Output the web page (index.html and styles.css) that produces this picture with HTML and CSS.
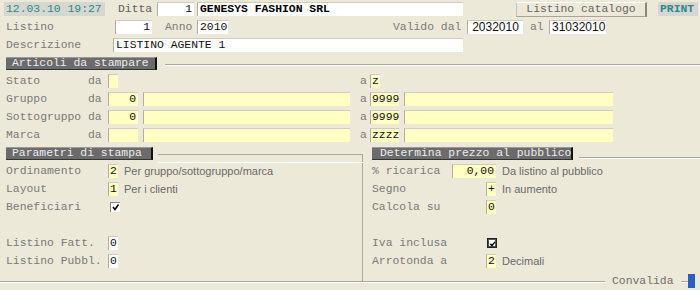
FILE: index.html
```html
<!DOCTYPE html>
<html lang="it">
<head>
    <meta charset="UTF-8">
    <title>Listino catalogo</title>
    <link rel="stylesheet" href="styles.css">
</head>
<body>
    <div class="row row-top">
        <span class="clock">12.03.10 19:27</span>
        <span class="lbl lbl-ditta">Ditta</span>
        <span class="fld white num w-code">1</span>
        <span class="fld white strong w-name">GENESYS FASHION SRL</span>
        <span class="btn">Listino catalogo</span>
        <span class="print">PRINT</span>
    </div>
    <div class="row row-pad">
        <span class="lbl w-listino">Listino</span>
        <span class="fld white num w-code">1</span>
        <span class="lbl lbl-anno">Anno</span>
        <span class="fld white w-anno">2010</span>
        <span class="lbl lbl-valido">Valido dal</span>
        <span class="fld white date w-date">2032010</span>
        <span class="lbl lbl-al">al</span>
        <span class="fld white date w-date2">31032010</span>
    </div>
    <div class="row row-pad">
        <span class="lbl w-descr">Descrizione</span>
        <span class="fld white w-descr-fld">LISTINO AGENTE 1</span>
    </div>

    <!-- articoli da stampare -->
    <div class="sec-row">
        <span class="sec w-sec1">Articoli da stampare</span>
        <span class="sec-line"></span>
    </div>
    <div class="range">
        <span class="lbl">Stato</span><span class="lbl">da</span>
        <span class="from"><span class="fld yellow w-tiny"></span></span>
        <span class="lbl">a</span>
        <span class="to"><span class="fld yellow w-tiny">z</span></span>

        <span class="lbl">Gruppo</span><span class="lbl">da</span>
        <span class="from"><span class="fld yellow num w-cod">0</span><span class="fld yellow w-desc1"></span></span>
        <span class="lbl">a</span>
        <span class="to"><span class="fld yellow w-cod2">9999</span><span class="fld yellow w-desc2"></span></span>

        <span class="lbl">Sottogruppo</span><span class="lbl">da</span>
        <span class="from"><span class="fld yellow num w-cod">0</span><span class="fld yellow w-desc1"></span></span>
        <span class="lbl">a</span>
        <span class="to"><span class="fld yellow w-cod2">9999</span><span class="fld yellow w-desc2"></span></span>

        <span class="lbl">Marca</span><span class="lbl">da</span>
        <span class="from"><span class="fld yellow w-cod"></span><span class="fld yellow w-desc1"></span></span>
        <span class="lbl">a</span>
        <span class="to"><span class="fld yellow w-cod2">zzzz</span><span class="fld yellow w-desc2"></span></span>
    </div>

    <!-- parametri / prezzo -->
    <div class="params">
        <div class="col-left">
            <div class="sec-row sec-row-left">
                <span class="sec w-sec2">Parametri di stampa</span>
                <span class="sec-line sec-corner"></span>
            </div>
            <div class="col-body">
                <div class="prow">
                    <span class="lbl w-plbl">Ordinamento</span>
                    <span class="fld yellow w-tiny">2</span>
                    <span class="note">Per gruppo/sottogruppo/marca</span>
                </div>
                <div class="prow">
                    <span class="lbl w-plbl">Layout</span>
                    <span class="fld yellow w-tiny">1</span>
                    <span class="note">Per i clienti</span>
                </div>
                <div class="prow">
                    <span class="lbl w-plbl">Beneficiari</span>
                    <span class="chk">
                        <svg width="9" height="9" viewBox="0 0 9 9"><polyline points="2,4 4,6.5 7.5,1.5" fill="none" stroke="#000" stroke-width="1.6"/></svg>
                    </span>
                </div>
                <div class="prow"></div>
                <div class="prow">
                    <span class="lbl w-plbl">Listino Fatt.</span>
                    <span class="fld white w-tiny">0</span>
                </div>
                <div class="prow">
                    <span class="lbl w-plbl">Listino Pubbl.</span>
                    <span class="fld white w-tiny">0</span>
                </div>
            </div>
        </div>
        <div class="col-right">
            <div class="sec-row">
                <span class="sec w-sec3">Determina prezzo al pubblico</span>
                <span class="sec-line sec-line-low"></span>
            </div>
            <div class="prow">
                <span class="lbl w-rlbl">% ricarica</span>
                <span class="slot"><span class="fld yellow num w-perc">0,00</span></span>
                <span class="note">Da listino al pubblico</span>
            </div>
            <div class="prow">
                <span class="lbl w-rlbl">Segno</span>
                <span class="slot"><span class="fld yellow w-tiny">+</span></span>
                <span class="note">In aumento</span>
            </div>
            <div class="prow">
                <span class="lbl w-rlbl">Calcola su</span>
                <span class="slot"><span class="fld yellow w-tiny">0</span></span>
            </div>
            <div class="prow"></div>
            <div class="prow">
                <span class="lbl w-rlbl">Iva inclusa</span>
                <span class="slot">
                    <span class="chk chk-dark">
                        <svg width="8" height="8" viewBox="0 0 8 8"><polyline points="1.5,3.8 3.4,5.8 6.8,1.6" fill="none" stroke="#000" stroke-width="1.6"/></svg>
                    </span>
                </span>
            </div>
            <div class="prow">
                <span class="lbl w-rlbl">Arrotonda a</span>
                <span class="slot"><span class="fld yellow w-tiny">2</span></span>
                <span class="note">Decimali</span>
            </div>
        </div>
    </div>

    <div class="footer">
        <span class="foot-line"></span>
        <span class="lbl foot-text">Convalida</span>
        <span class="foot-line foot-short"></span>
        <span class="mark"></span>
    </div>
</body>
</html>
```

FILE: styles.css
```css
* {
    box-sizing: border-box;
}
body {
    margin: 0;
    width: 700px;
    height: 290px;
    overflow: hidden;
    background-color: #ece9d8;
    font-family: 'Liberation Mono', 'Courier New', monospace;
    font-size: 11.4px;
    color: #7a7a7a;
}
.row {
    display: flex;
    align-items: center;
    height: 18px;
}
.row-top {
    padding-left: 4px;
}
.row-pad {
    padding-left: 6px;
}
.lbl {
    display: inline-block;
    white-space: pre;
    line-height: 14px;
}
.fld {
    display: inline-block;
    height: 14px;
    line-height: 13px;
    padding: 0 2px;
    color: #111;
    white-space: pre;
    overflow: hidden;
    border-top: 1px solid #cfccbf;
    border-left: 1px solid #b2afa2;
}
.white {
    background-color: #fff;
}
.yellow {
    background-color: #ffffc2;
}
.num {
    text-align: right;
}
.strong {
    font-weight: bold;
    color: #000;
}
.date {
    font-family: 'Liberation Sans', Arial, sans-serif;
    font-size: 12px;
    text-align: center;
}
.clock {
    width: 101px;
    height: 14px;
    line-height: 14px;
    padding-left: 2px;
    background-color: #d5d7d0;
    color: #2b8a8a;
}
.print {
    width: 40px;
    height: 14px;
    line-height: 14px;
    margin-left: 11px;
    padding-left: 2px;
    background-color: #d5d7d0;
    color: #2b8a8a;
    font-weight: bold;
}
.btn {
    width: 131px;
    height: 15px;
    line-height: 13px;
    margin-left: 53px;
    text-align: center;
    color: #666;
    background-color: #ece9d8;
    border-top: 1px solid #fff;
    border-left: 1px solid #c8c5b8;
    border-right: 2px solid #8a8778;
    border-bottom: 1px solid #a8a598;
}
.lbl-ditta { margin-left: 13px; width: 39px; color: #5e5e5e; }
.w-code { width: 37px; }
.w-name { width: 266px; margin-left: 3px; }
.w-listino { width: 109px; }
.lbl-anno { margin-left: 13px; width: 32px; }
.w-anno { width: 31px; }
.lbl-valido { margin-left: 165px; width: 74px; }
.w-date { width: 56px; }
.lbl-al { margin-left: 7px; width: 19px; }
.w-date2 { width: 57px; }
.w-descr { width: 107px; }
.w-descr-fld { width: 350px; }

/* section headers */
.sec-row {
    display: flex;
    align-items: flex-start;
    height: 13px;
    margin-top: 3px;
    padding-left: 6px;
}
.sec {
    display: inline-block;
    height: 13px;
    line-height: 11px;
    padding-left: 6px;
    background-color: #6b6b6b;
    color: #ececec;
    white-space: pre;
    border-top: 1px solid #9a9a9a;
    border-right: 2px solid #111;
    border-bottom: 1px solid #333;
}
.sec-line {
    flex: 1;
    margin-top: 7px;
    margin-left: 8px;
    border-top: 1px solid #aca899;
    box-shadow: 0 1px 0 #fff;
}
.sec-line-low {
    margin-top: 10px;
    margin-left: 6px;
}
.w-sec1 { width: 151px; }
.w-sec2 { width: 147px; }
.w-sec3 { width: 201px; padding-left: 8px; }

/* ranges */
.range {
    display: grid;
    grid-template-columns: 82px 20px 252px 10px auto;
    grid-auto-rows: 18px;
    align-items: center;
    margin-top: 2px;
    padding-left: 6px;
}
.from, .to {
    display: flex;
    align-items: center;
}
.w-tiny { width: 10px; padding: 0 1px; }
.w-cod { width: 30px; }
.w-desc1 { width: 207px; margin-left: 5px; }
.w-cod2 { width: 29px; padding: 0 1px; }
.w-desc2 { width: 209px; margin-left: 5px; }

/* parametri */
.params {
    display: grid;
    grid-template-columns: 363px 1fr;
    margin-top: 3px;
}
.sec-row-left {
    margin-top: 0;
    height: 15px;
}
.sec-corner {
    margin-left: 5px;
    border-right: 1px solid #aca899;
    align-self: stretch;
}
.col-body {
    padding-top: 0;
    padding-bottom: 11px;
    border-right: 1px solid #aca899;
}
.col-right .sec-row {
    margin-top: 0;
    padding-left: 9px;
    height: 15px;
}
.prow {
    display: flex;
    align-items: center;
    height: 18px;
    padding-left: 6px;
}
.col-right .prow {
    padding-left: 9px;
}
.w-plbl { width: 102px; }
.w-rlbl { width: 80px; }
.slot {
    display: flex;
    justify-content: flex-end;
    width: 44px;
}
.w-perc { width: 44px; }
.note {
    margin-left: 6px;
    font-family: 'Liberation Sans', Arial, sans-serif;
    font-size: 11px;
    color: #6a6a6a;
}
.chk {
    display: inline-flex;
    width: 10px;
    height: 10px;
    margin-left: 2px;
    background-color: #fff;
    border-top: 1px solid #8a8a8a;
    border-left: 1px solid #8a8a8a;
}
.chk-dark {
    margin-right: -1px;
    border: 1px solid #222;
    box-shadow: inset 0 0 0 1px #555;
    padding: 0.5px;
}

/* footer */
.footer {
    display: flex;
    align-items: center;
    height: 14px;
    margin-top: -7px;
}
.foot-line {
    width: 605px;
    border-top: 1px solid #aca899;
    box-shadow: 0 1px 0 #fff;
}
.foot-text {
    margin-left: 7px;
    color: #6f6f6f;
}
.foot-short {
    width: 7px;
    margin-left: 7px;
}
.mark {
    width: 7px;
    height: 14px;
    background-color: #2a5fc9;
}
```
